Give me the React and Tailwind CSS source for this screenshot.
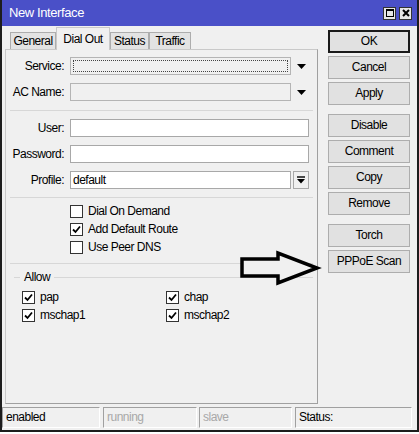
import { useState } from "react";

const font = "font-['Liberation_Sans',Arial,sans-serif] text-[12px] tracking-[-0.5px]";

function Check({ checked }) {
  return (
    <span className="flex h-[13px] w-[13px] shrink-0 items-center justify-center border border-[#333] bg-white">
      {checked && (
        <svg width="9" height="9" viewBox="0 0 9 9">
          <path d="M1 4.5 L3.5 7 L8 1.5" fill="none" stroke="#000" strokeWidth="1.8" />
        </svg>
      )}
    </span>
  );
}

function CheckRow({ label, checked, className = "" }) {
  return (
    <div className={"flex h-[13px] items-center gap-[5px] " + className}>
      <Check checked={checked} />
      <span className="leading-[13px]">{label}</span>
    </div>
  );
}

function Field({ label, children, className = "" }) {
  return (
    <div className={"flex h-[18px] items-center " + className}>
      <span className="w-[58px] text-right leading-[18px]">{label}</span>
      {children}
    </div>
  );
}

function DownTriangle() {
  return (
    <svg width="9" height="5" viewBox="0 0 9 5" className="ml-[6px]">
      <path d="M0 0 H9 L4.5 5 Z" fill="#000" />
    </svg>
  );
}

function Separator({ className = "" }) {
  return <div className={"mx-[4px] h-px bg-[#d7d7d7] " + className} />;
}

function SideButton({ children, primary, className = "" }) {
  return (
    <button
      className={
        "h-[23px] w-[82px] bg-[#e1e1e1] text-center leading-[19px] " +
        (primary ? "border-2 border-[#1a1a1a] " : "border border-[#adadad] ") +
        className
      }
    >
      {children}
    </button>
  );
}

function StatusCell({ children, width, dim }) {
  return (
    <div
      className={
        "h-[21px] border border-l-[#a0a0a0] border-t-[#a0a0a0] border-b-white border-r-white pl-[3px] leading-[19px] " +
        width +
        (dim ? " text-[#a8a8a8]" : " text-black")
      }
    >
      {children}
    </div>
  );
}

export default function App() {
  const [tab, setTab] = useState("Dial Out");
  const tabs = [
    { name: "General", w: "w-[46px]" },
    { name: "Dial Out", w: "w-[54px]" },
    { name: "Status", w: "w-[39px]" },
    { name: "Traffic", w: "w-[42px]" },
  ];

  return (
    <div className={"relative h-[434px] w-[419px] bg-white " + font}>
      <div className="flex h-[432px] w-[419px] flex-col border-x-2 border-b-2 border-[#1d1d1d] bg-[#f0f0f0]">
        {/* title bar */}
        <div className="flex h-[26px] shrink-0 items-center bg-[#4a50c8] pl-[7px] pr-[5px] text-white">
          <span className="flex-1 text-[13px] tracking-[-0.4px]">New Interface</span>
          <div className="flex h-[13px] w-[13px] items-center justify-center border border-[#333] bg-[#e6e6e6]">
            <div className="h-[8px] w-[8px] border border-black border-t-2" />
          </div>
          <div className="ml-[3px] flex h-[13px] w-[13px] items-center justify-center border border-[#333] bg-[#e6e6e6]">
            <svg width="8" height="8" viewBox="0 0 8 8">
              <path d="M1 1 L7 7 M7 1 L1 7" stroke="#000" strokeWidth="2" />
            </svg>
          </div>
        </div>

        <div className="flex flex-1 pl-[3px]">
          {/* tabs + panel */}
          <div className="flex w-[313px] flex-col">
            <div className="flex h-[23px] items-end pl-[5px]">
              {tabs.map((t) => {
                const active = t.name === tab;
                return (
                  <button
                    key={t.name}
                    onClick={() => setTab(t.name)}
                    className={
                      t.w +
                      " relative text-center " +
                      (active
                        ? "z-10 -mb-px h-[23px] border border-b-0 border-[#c9c9c9] bg-[#f0f0f0] leading-[18px]"
                        : "h-[17px] border border-b-0 border-[#adadad] bg-[#e3e3e3] leading-[16px]")
                    }
                  >
                    {t.name}
                  </button>
                );
              })}
            </div>

            <div className="h-[355px] border border-[#c9c9c9] border-r-[#a0a0a0] border-b-[#a0a0a0] pt-[7px]">
              <Field label="Service:">
                <div className="ml-[6px] flex h-[18px] w-[221px] items-center border border-[#b4b4b4] bg-[#f0f0f0] p-[2px]">
                  <div className="h-full w-full border border-dotted border-[#444]" />
                </div>
                <DownTriangle />
              </Field>
              <Field label="AC Name:" className="mt-[8px]">
                <div className="ml-[6px] h-[18px] w-[221px] border border-[#b4b4b4] bg-[#f0f0f0]" />
                <DownTriangle />
              </Field>

              <Separator className="mt-[9px]" />

              <Field label="User:" className="mt-[8px]">
                <div className="ml-[6px] h-[18px] w-[239px] border border-[#a8a8a8] bg-white" />
              </Field>
              <Field label="Password:" className="mt-[8px]">
                <div className="ml-[6px] h-[18px] w-[239px] border border-[#a8a8a8] bg-white" />
              </Field>
              <Field label="Profile:" className="mt-[8px]">
                <div className="ml-[6px] h-[18px] w-[221px] border border-[#a8a8a8] bg-white pl-[2px] leading-[16px]">
                  default
                </div>
                <div className="ml-[2px] flex h-[18px] w-[16px] items-center justify-center border border-[#a8a8a8] bg-[#f0f0f0]">
                  <svg width="8" height="8" viewBox="0 0 8 8">
                    <path d="M0 1 H8" stroke="#000" strokeWidth="1.4" />
                    <path d="M0 3 H8 L4 7.5 Z" fill="#000" />
                  </svg>
                </div>
              </Field>

              <Separator className="mt-[8px]" />

              <div className="flex flex-col gap-[5px] pl-[64px] pt-[7px]">
                <CheckRow label="Dial On Demand" />
                <CheckRow label="Add Default Route" checked />
                <CheckRow label="Use Peer DNS" />
              </div>

              <Separator className="mt-[9px]" />

              {/* Allow group */}
              <div className="mt-[7px] flex h-[13px] items-center pl-[8px] pr-[4px]">
                <div className="h-px w-[6px] bg-[#d7d7d7]" />
                <span className="px-[4px] leading-[13px]">Allow</span>
                <div className="h-px flex-1 bg-[#d7d7d7]" />
              </div>
              <div className="mt-[7px] grid grid-cols-[144px_1fr] gap-y-[5px] pl-[16px]">
                <CheckRow label="pap" checked />
                <CheckRow label="chap" checked />
                <CheckRow label="mschap1" checked />
                <CheckRow label="mschap2" checked />
              </div>
            </div>
          </div>

          {/* action buttons */}
          <div className="ml-[10px] flex flex-col pt-[4px]">
            <SideButton primary>OK</SideButton>
            <SideButton className="mt-[3px]">Cancel</SideButton>
            <SideButton className="mt-[3px]">Apply</SideButton>
            <SideButton className="mt-[9px]">Disable</SideButton>
            <SideButton className="mt-[3px]">Comment</SideButton>
            <SideButton className="mt-[3px]">Copy</SideButton>
            <SideButton className="mt-[3px]">Remove</SideButton>
            <SideButton className="mt-[9px]">Torch</SideButton>
            <SideButton className="mt-[3px]">PPPoE Scan</SideButton>
          </div>
        </div>

        {/* status bar */}
        <div className="mb-[2px] mt-[3px] flex items-center">
          <StatusCell width="w-[98px]">enabled</StatusCell>
          <div className="w-[3px]" />
          <StatusCell width="w-[94px]" dim>running</StatusCell>
          <div className="w-[2px]" />
          <StatusCell width="w-[93px]" dim>slave</StatusCell>
          <div className="w-[3px]" />
          <StatusCell width="w-[117px]">Status:</StatusCell>
        </div>
      </div>

      {/* pointer arrow */}
      <svg
        className="absolute left-[238px] top-[249px]"
        width="84"
        height="40"
        viewBox="238 249 84 40"
      >
        <path
          d="M242 259 H278 V253 L317 268 L278 283 V276 H242 Z"
          fill="#f0f0f0"
          stroke="#000"
          strokeWidth="3.5"
          strokeLinejoin="miter"
        />
      </svg>
    </div>
  );
}
